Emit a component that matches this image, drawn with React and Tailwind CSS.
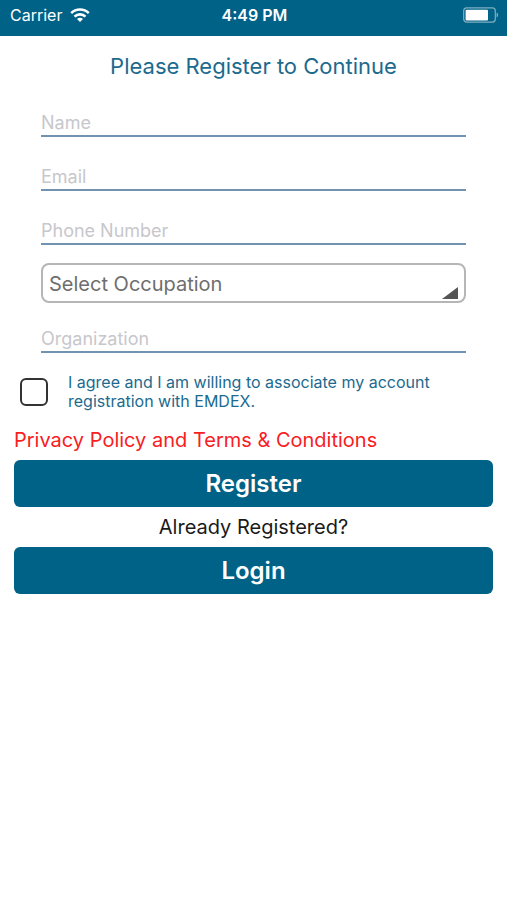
import { useState } from "react";

const inputClass =
  "block w-full h-10 pt-3 border-b-2 border-[#7193b0] bg-transparent text-lg leading-6 text-gray-800 placeholder:text-[#c7c7cc] outline-none";

const buttonClass =
  "block w-full h-[47px] rounded-md bg-[#006287] text-2xl font-semibold text-white";

const occupations = ["Doctor", "Pharmacist", "Nurse", "Student", "Other"];

function StatusBar() {
  return (
    <header className="grid grid-cols-3 items-center h-9 pl-2.5 pr-2 pb-1.5 bg-[#006287] text-white">
      <div className="flex items-center gap-2 text-base">
        <span>Carrier</span>
        <svg className="w-5 h-4" viewBox="0 0 20 16" fill="none" stroke="currentColor" strokeWidth="2.6">
          <path d="M1.2 6.2a12.4 12.4 0 0 1 17.6 0" />
          <path d="M4.5 9.6a7.8 7.8 0 0 1 11 0" />
          <path d="M10 15l-3-3.1a4.2 4.2 0 0 1 6 0z" fill="currentColor" stroke="none" />
        </svg>
      </div>
      <span className="text-center text-base font-semibold">4:49 PM</span>
      <svg className="justify-self-end w-9 h-4" viewBox="0 0 36 16" fill="none">
        <rect x="0.7" y="0.9" width="31.6" height="14.2" rx="3" stroke="#7fb0c3" strokeWidth="1.2" />
        <rect x="2.6" y="2.8" width="22.4" height="10.6" rx="1" fill="white" />
        <path d="M33.6 5.5c2 .8 2 4.2 0 5z" fill="#7fb0c3" />
      </svg>
    </header>
  );
}

function Field({ name, label, type = "text" }) {
  return <input name={name} type={type} aria-label={label} placeholder={label} className={inputClass} />;
}

export default function App() {
  const [occupation, setOccupation] = useState("");
  const [agreed, setAgreed] = useState(false);

  return (
    <div className="min-h-screen bg-white font-['Inter',sans-serif]">
      <StatusBar />

      <main>
        <h1 className="pt-4 text-center text-[22px] leading-7 text-[#1c6a8e]">
          Please Register to Continue
        </h1>

        <form onSubmit={(e) => e.preventDefault()} className="px-3.5">
          <div className="flex flex-col gap-3.5 px-[27px] pt-[17px]">
            <Field name="name" label="Name" />
            <Field name="email" label="Email" type="email" />
            <Field name="phone" label="Phone Number" type="tel" />

            <div className="relative pt-1 -mb-1">
              <select
                name="occupation"
                aria-label="Occupation"
                value={occupation}
                onChange={(e) => setOccupation(e.target.value)}
                className="block w-full h-10 px-1.5 pt-0.5 appearance-none rounded-lg border-2 border-[#b6b6b6] bg-white text-xl leading-6 text-[#6e6e6e] outline-none"
              >
                <option value="">Select Occupation</option>
                {occupations.map((o) => (
                  <option key={o} value={o}>
                    {o}
                  </option>
                ))}
              </select>
              <svg className="absolute right-2 bottom-1 w-4 h-3 pointer-events-none" viewBox="0 0 16 12">
                <path d="M16 0v12H0z" fill="#555" />
              </svg>
            </div>

            <Field name="organization" label="Organization" />
          </div>

          {/* Consent */}
          <div className="flex items-center gap-5 pt-5 pl-1.5 pr-8">
            <input
              id="agree"
              type="checkbox"
              checked={agreed}
              onChange={(e) => setAgreed(e.target.checked)}
              className="shrink-0 size-7 appearance-none rounded-md border-2 border-[#333] bg-white checked:bg-[#006287]"
            />
            <label htmlFor="agree" className="text-base leading-[19px] text-[#1c6a8e]">
              I agree and I am willing to associate my account registration with EMDEX.
            </label>
          </div>

          <a href="#terms" className="block pt-[17px] pb-2 text-xl leading-6 text-[#f8201f]">
            Privacy Policy and Terms &amp; Conditions
          </a>

          <button type="submit" className={buttonClass}>
            Register
          </button>
          <p className="py-2 text-center text-xl leading-6 text-[#1a1a1a]">Already Registered?</p>
          <button type="button" className={buttonClass}>
            Login
          </button>
        </form>
      </main>
    </div>
  );
}
